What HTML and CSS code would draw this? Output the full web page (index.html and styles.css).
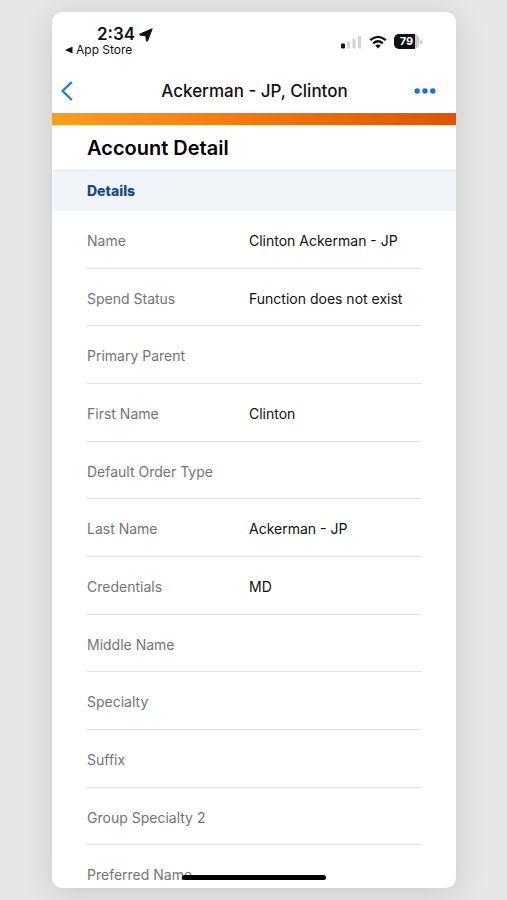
FILE: index.html
```html
<!DOCTYPE html>
<html lang="en">
<head>
<meta charset="utf-8">
<meta name="viewport" content="width=device-width, initial-scale=1">
<title>Account Detail</title>
<link rel="stylesheet" href="styles.css">
</head>
<body>
<main class="phone">
  <div class="status">
    <div class="status-left">
      <div class="clock">
        <span>2:34</span>
        <svg width="14" height="14" viewBox="0 0 14 14" aria-hidden="true"><path d="M13.200 .8 8.600 12.800Q8 14 7.500 12.900L6.700 7.600 1.200 7.200Q0 6.800 1 6Z" fill="#111" stroke="#111" stroke-width="1" stroke-linejoin="round"/></svg>
      </div>
      <a class="back-app" href="#">
        <svg width="8" height="8" viewBox="0 0 8 8" aria-hidden="true"><path d="M0 4 7.500 .5v7Z" fill="#111"/></svg>
        <span>App Store</span>
      </a>
    </div>
    <div class="status-right">
      <svg width="21" height="14" viewBox="0 0 21 14" aria-hidden="true">
        <rect x="0" y="8.500" width="4" height="5" rx="1.200" fill="#111"/>
        <g fill="#d4d4d4"><rect x="6" y="6.500" width="3.200" height="7" rx="1"/><rect x="11.500" y="4" width="3.200" height="9.500" rx="1"/><rect x="17" y="1" width="3.200" height="12.500" rx="1"/></g>
      </svg>
      <svg width="18" height="14" viewBox="0 0 18 14" aria-hidden="true">
        <g fill="none" stroke="#111" stroke-width="2.200"><path d="M1.200 5.200Q9-1.600 16.800 5.200"/><path d="M4.200 8.300Q9 4.200 13.800 8.300"/></g>
        <path d="M6.300 10.600Q9 8.600 11.700 10.600L9 13.500Z" fill="#111"/>
      </svg>
      <div class="battery"><span>79</span></div>
      <svg class="battery-tip" width="3" height="6" viewBox="0 0 3 6" aria-hidden="true"><path d="M0 0Q3 1.500 3 3T0 6Z" fill="#d0d0d0"/></svg>
    </div>
  </div>
  <header class="nav">
    <button class="icon-button" type="button" aria-label="Back">
      <svg width="12" height="20" viewBox="0 0 12 20" aria-hidden="true"><path d="M10.800 1 1.500 10l9.300 9" fill="none" stroke="#1f7de0" stroke-width="2.400" stroke-linejoin="round"/></svg>
    </button>
    <h1 class="nav-title">Ackerman - JP, Clinton</h1>
    <button class="icon-button more" type="button" aria-label="More">
      <svg width="22" height="6" viewBox="0 0 22 6" aria-hidden="true"><g fill="#1b72d4"><circle cx="3.200" cy="3" r="2.700"/><circle cx="11" cy="3" r="2.700"/><circle cx="18.800" cy="3" r="2.700"/></g></svg>
    </button>
  </header>
  <div class="stripe"></div>
  <h2 class="page-title">Account Detail</h2>
  <h3 class="section-title">Details</h3>
  <dl class="fields">
    <div class="field"><dt>Name</dt><dd>Clinton Ackerman - JP</dd></div>
    <div class="field"><dt>Spend Status</dt><dd>Function does not exist</dd></div>
    <div class="field"><dt>Primary Parent</dt><dd></dd></div>
    <div class="field"><dt>First Name</dt><dd>Clinton</dd></div>
    <div class="field"><dt>Default Order Type</dt><dd></dd></div>
    <div class="field"><dt>Last Name</dt><dd>Ackerman - JP</dd></div>
    <div class="field"><dt>Credentials</dt><dd>MD</dd></div>
    <div class="field"><dt>Middle Name</dt><dd></dd></div>
    <div class="field"><dt>Specialty</dt><dd></dd></div>
    <div class="field"><dt>Suffix</dt><dd></dd></div>
    <div class="field"><dt>Group Specialty 2</dt><dd></dd></div>
    <div class="field"><dt>Preferred Name</dt><dd></dd></div>
  </dl>
  <div class="home-bar"></div>
</main>
</body>
</html>
```
FILE: styles.css
```css
* {
  box-sizing: border-box;
}

body {
  margin: 0;
  height: 100vh;
  padding: 12px 51px 12px 52px;
  background: #e6e6e6;
  font-family: Inter, "Liberation Sans", sans-serif;
  color: #111;
}

h1, h2, h3, dl, dd {
  margin: 0;
}

.phone {
  position: relative;
  display: flex;
  flex-direction: column;
  height: 100%;
  overflow: hidden;
  border-radius: 10px;
  background: #fff;
  box-shadow: 0 6px 32px rgba(0, 0, 0, 0.12);
}

.status {
  display: flex;
  justify-content: space-between;
  align-items: flex-start;
  height: 56px;
  padding: 13px 33px 0 13px;
}

.clock {
  display: flex;
  align-items: center;
  gap: 4px;
  padding-left: 32px;
  font-size: 17px;
  font-weight: 600;
  line-height: 19px;
}

.back-app {
  display: flex;
  align-items: center;
  gap: 3px;
  color: #111;
  font-size: 12px;
  font-weight: 400;
  line-height: 12px;
  text-decoration: none;
}

.status-right {
  display: flex;
  align-items: center;
  padding-top: 9px;
  gap: 7px;
}

.battery {
  width: 25px;
  height: 15px;
  border-radius: 5px;
  background: linear-gradient(90deg, #111 84%, #cacaca 84%);
  color: #fff;
  font-size: 11px;
  font-weight: 700;
  line-height: 15px;
  text-align: center;
}

.battery-tip {
  margin-left: -6px;
}

.nav {
  display: grid;
  grid-template-columns: 40px 1fr 40px;
  align-items: center;
  height: 45px;
  padding: 0 8px 0 9px;
}

.icon-button {
  display: flex;
  align-items: center;
  height: 44px;
  padding: 0;
  border: 0;
  background: none;
}

.more {
  justify-content: flex-end;
  padding-right: 12px;
}

.nav-title {
  font-size: 17px;
  font-weight: 500;
  line-height: 24px;
  text-align: center;
  white-space: nowrap;
}

.stripe {
  flex: none;
  height: 12px;
  background: linear-gradient(90deg, #fd9e1b, #f57708 50%, #e45000);
}

.page-title {
  padding: 1px 35px 0;
  color: #000;
  font-size: 20px;
  font-weight: 600;
  line-height: 44px;
}

.section-title {
  padding: 0 35px;
  border-top: 1px solid #e6ebef;
  background: #f1f5f9;
  color: #134a8c;
  font-size: 14px;
  font-weight: 800;
  line-height: 40px;
}

/* The last row runs past the bottom edge, under the home indicator. */
.fields {
  display: flex;
  flex: 1;
  flex-direction: column;
  margin: 0 35px -15px;
}

.field {
  display: grid;
  flex: 1;
  grid-template-columns: 162px 1fr;
  align-items: center;
  padding-top: 3px;
  border-bottom: 1px solid #e2e2e2;
  font-size: 14px;
  line-height: 20px;
}

dt {
  color: #747474;
}

.home-bar {
  position: absolute;
  bottom: 8px;
  left: 50%;
  width: 144px;
  height: 5px;
  border-radius: 3px;
  background: #000;
  transform: translateX(-50%);
}
```
